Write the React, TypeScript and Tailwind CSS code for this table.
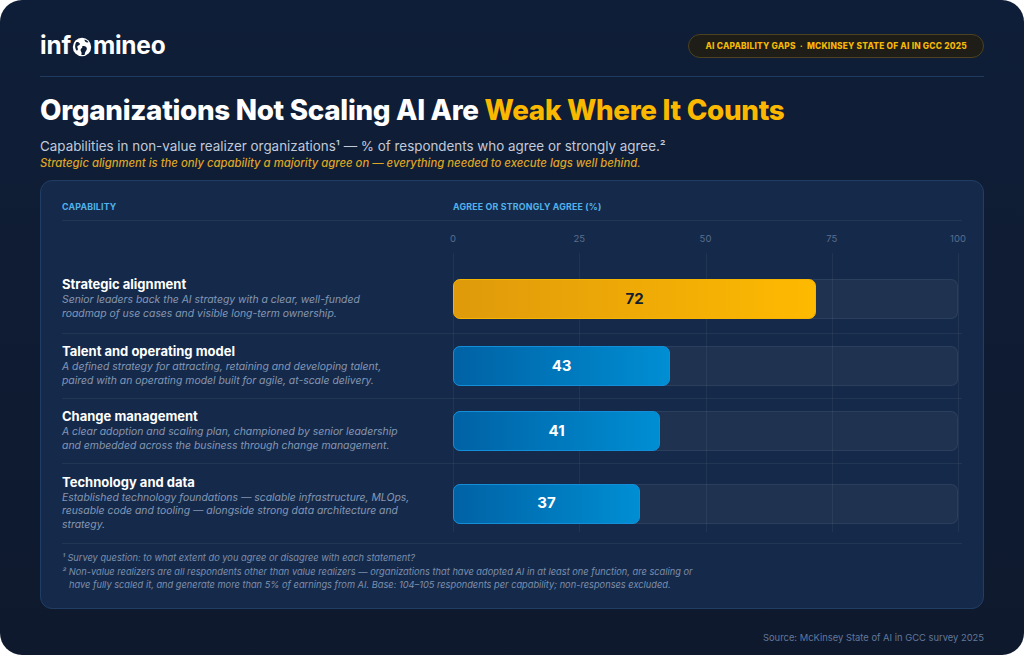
import React from "react";

interface Capability {
  title: string;
  lines: string[];
  value: number;
  highlight?: boolean;
  rowClass: string;
}

const capabilities: Capability[] = [
  {
    title: "Strategic alignment",
    lines: [
      "Senior leaders back the AI strategy with a clear, well-funded",
      "roadmap of use cases and visible long-term ownership.",
    ],
    value: 72,
    highlight: true,
    rowClass: "min-h-[69px]",
  },
  {
    title: "Talent and operating model",
    lines: [
      "A defined strategy for attracting, retaining and developing talent,",
      "paired with an operating model built for agile, at-scale delivery.",
    ],
    value: 43,
    rowClass: "min-h-[65px]",
  },
  {
    title: "Change management",
    lines: [
      "A clear adoption and scaling plan, championed by senior leadership",
      "and embedded across the business through change management.",
    ],
    value: 41,
    rowClass: "min-h-[65px]",
  },
  {
    title: "Technology and data",
    lines: [
      "Established technology foundations — scalable infrastructure, MLOps,",
      "reusable code and tooling — alongside strong data architecture and",
      "strategy.",
    ],
    value: 37,
    rowClass: "min-h-[80px]",
  },
];

const ticks = [
  { label: "0", pos: "left-0" },
  { label: "25", pos: "left-1/4" },
  { label: "50", pos: "left-1/2" },
  { label: "75", pos: "left-3/4" },
  { label: "100", pos: "left-full" },
];

const Globe = () => (
  <svg viewBox="0 0 20 20" className="w-[20px] h-[20px] mx-[1px] mt-[4px]">
    <circle cx="10" cy="10" r="9.2" fill="#ffffff" />
    <path
      d="M4.2 5.2c1.6-.4 3 .2 3.6 1.4.5 1-.4 1.6-1.4 1.9-1.2.4-1.4 1.4-.8 2.4.7 1.1.3 2.3-.8 2.9-.8-.9-1.4-2.2-1.6-3.6-.2-1.8.2-3.6 1-5z"
      fill="#0f1e38"
    />
    <path
      d="M10.2 9.2c1.4-.6 3-.3 4 .8 1 1.1.9 2.6-.1 3.7-1 1.2-1.4 2.6-1.3 4-1.4.4-2.6.4-3.6.1.6-1.2.5-2.4-.2-3.4-.8-1.2-.4-2.9 1.2-3.6z"
      fill="#0f1e38"
    />
    <path d="M12.6 2.6c1.6.4 3 1.4 3.9 2.7-1.3.3-2.6 0-3.4-.8-.5-.5-.7-1.2-.5-1.9z" fill="#0f1e38" />
  </svg>
);

const CapabilityRow: React.FC<{ item: Capability }> = ({ item }) => (
  <div className={`flex items-center border-b border-white/[0.06] ${item.rowClass}`}>
    <div className="w-[367px] shrink-0 pb-[3px]">
      <p className="text-[13px] leading-[18px] font-bold text-white">{item.title}</p>
      <p className="text-[10.4px] leading-[13.3px] italic text-[#8597b4]">
        {item.lines.map((l, i) => (
          <React.Fragment key={i}>
            {l}
            {i < item.lines.length - 1 && <br />}
          </React.Fragment>
        ))}
      </p>
    </div>
    <div className="flex-1 ml-6 pr-1">
      <div className="relative h-10 rounded-[7px] bg-white/[0.045] border border-white/[0.06]">
        <div
          style={{ width: `calc(${item.value}% + 1px)` }}
          className={`absolute -left-px -top-px -bottom-px rounded-[7px] border flex items-center justify-center text-[15px] font-bold ${
            item.highlight
              ? "bg-gradient-to-r from-[#df9a0b] to-[#feba00] border-[#f6b400] text-[#131c30]"
              : "bg-gradient-to-r from-[#0062a5] to-[#008ed3] border-[#138fda] text-white"
          }`}
        >
          {item.value}
        </div>
      </div>
    </div>
  </div>
);

export default function App() {
  return (
    <div className="w-[1024px] h-[655px] bg-white" style={{ fontFamily: "Inter, 'Noto Sans', sans-serif" }}>
      <div className="w-full h-full rounded-[22px] bg-gradient-to-b from-[#0f1e38] to-[#0e192d] px-10 pt-[34px]">
        {/* header */}
        <div className="flex items-center justify-between h-6">
          <div className="flex items-center text-[24.4px] font-bold text-white tracking-[-0.2px] leading-none -mt-[2px]">
            <span>inf</span>
            <Globe />
            <span>mineo</span>
          </div>
          <div className="h-6 px-[16px] rounded-full border border-[#4d4220] bg-[#1e1d17] flex items-center text-[8.4px] font-extrabold tracking-[0.2px] text-[#f4b806]">
            AI CAPABILITY GAPS&nbsp;&nbsp;·&nbsp;&nbsp;MCKINSEY STATE OF AI IN GCC 2025
          </div>
        </div>
        <div className="mt-[18px] border-b border-[#1f3a5f]" />

        {/* title */}
        <h1 className="mt-[16px] text-[27.8px] leading-[34px] font-extrabold text-white tracking-[-0.3px]">
          Organizations Not Scaling AI Are <span className="text-[#fbb800]">Weak Where It Counts</span>
        </h1>
        <p className="mt-[10px] text-[13.4px] leading-[18px] text-[#c2cad9]">
          Capabilities in non-value realizer organizations¹ — % of respondents who agree or strongly agree.²
        </p>
        <p className="mt-[1px] text-[11.3px] leading-[14px] italic font-medium text-[#dfa424]">
          Strategic alignment is the only capability a majority agree on — everything needed to execute lags well behind.
        </p>

        {/* card */}
        <div className="mt-[10px] rounded-[12px] border border-[#213d64] bg-[#152a4a] px-[21px] pt-[19px] pb-[16px]">
          <div className="flex border-b border-white/[0.06] pb-[6px] text-[8.8px] leading-[14px] font-bold tracking-[0.2px] text-[#53b2e9]">
            <div className="w-[391px] shrink-0">CAPABILITY</div>
            <div>AGREE OR STRONGLY AGREE (%)</div>
          </div>

          <div className="flex h-8">
            <div className="w-[391px] shrink-0" />
            <div className="relative flex-1 mr-1">
              {ticks.map((t) => (
                <span
                  key={t.label}
                  className={`absolute top-[12px] -translate-x-1/2 text-[9.5px] leading-[12px] text-[#5a6e8d] ${t.pos}`}
                >
                  {t.label}
                </span>
              ))}
            </div>
          </div>

          <div className="relative pt-3">
            <div className="absolute top-0 bottom-3 left-[391px] right-1">
              {ticks.map((t) => (
                <div key={t.label} className={`absolute top-0 bottom-0 w-px bg-white/[0.05] ${t.pos}`} />
              ))}
            </div>
            <div className="relative">
              {capabilities.map((c) => (
                <CapabilityRow key={c.title} item={c} />
              ))}
            </div>
          </div>

          <div className="pt-[7px] text-[9.25px] leading-[13.5px] italic text-[#7d8fad]">
            <p>¹ Survey question: to what extent do you agree or disagree with each statement?</p>
            <p>
              ² Non-value realizers are all respondents other than value realizers — organizations that have adopted AI in at least one function, are scaling or
            </p>
            <p className="pl-[7px]">
              have fully scaled it, and generate more than 5% of earnings from AI. Base: 104–105 respondents per capability; non-responses excluded.
            </p>
          </div>
        </div>

        <div className="mt-[22px] text-right text-[9.4px] leading-[14px] text-[#62789b]">
          Source: McKinsey State of AI in GCC survey 2025
        </div>
      </div>
    </div>
  );
}
